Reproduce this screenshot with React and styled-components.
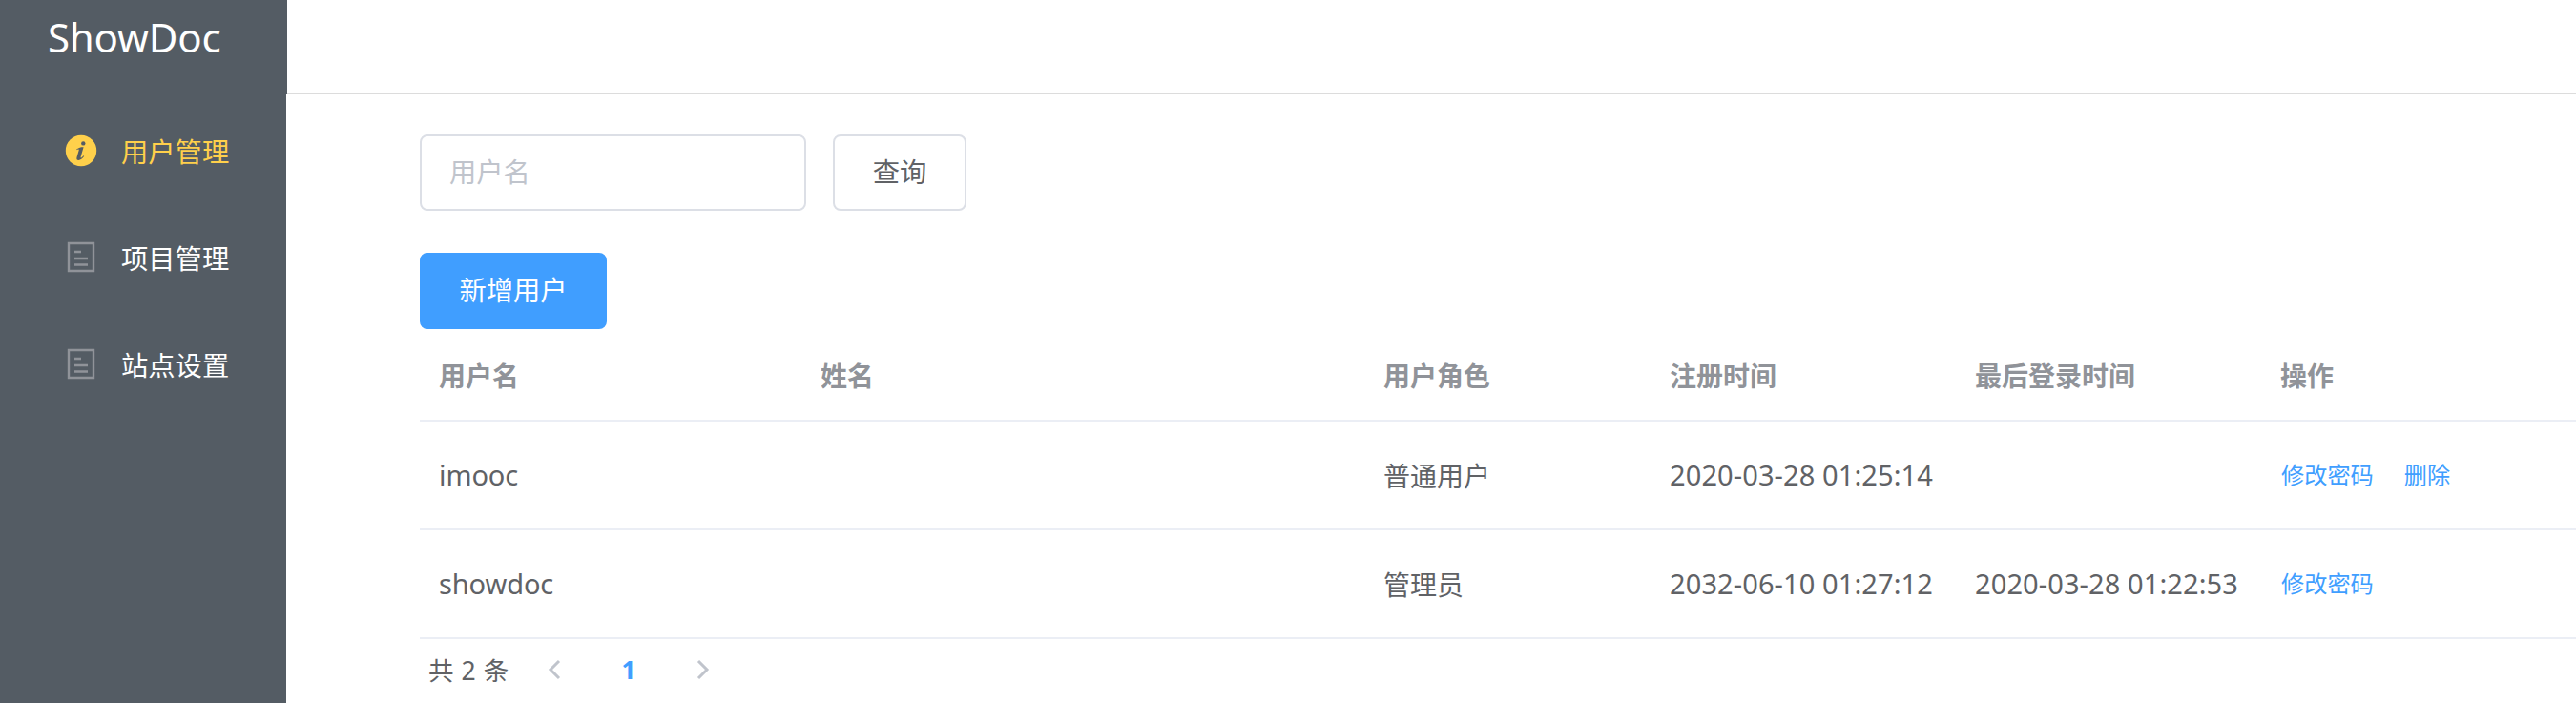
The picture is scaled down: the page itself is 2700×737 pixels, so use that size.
import React from "react";
import styled, { createGlobalStyle } from "styled-components";

const GlobalStyle = createGlobalStyle`
  * { box-sizing: border-box; }
  body {
    margin: 0;
    background: #fff;
    color: #606266;
    font-family: "Noto Sans", "Noto Sans CJK SC", sans-serif;
    font-size: 28px;
    overflow: hidden;
  }
  button, input { font: inherit; margin: 0; }
`;

const Page = styled.div`
  display: grid;
  grid-template-rows: 99px 1fr;
  width: 100%;
  height: 737px;
  overflow: hidden;
`;

const TopBar = styled.header`
  display: flex;
`;

const Brand = styled.div`
  width: 301px;
  padding-left: 50px;
  background: #545c64;
  color: #fff;
  font-size: 42px;
  letter-spacing: -0.2px;
  line-height: 78px;
`;

const TopRule = styled.div`
  flex: 1;
  border-bottom: 2px solid #dcdcdc;
`;

const Body = styled.div`
  display: flex;
  min-height: 0;
`;

const SideMenu = styled.nav`
  flex: none;
  width: 300px;
  padding-top: 4px;
  background: #545c64;
`;

const MenuItem = styled.a`
  display: flex;
  align-items: center;
  gap: 21px;
  height: 112px;
  padding: 0 0 3px 64px;
  color: ${(p) => (p.$active ? "#ffd04b" : "#fff")};
  font-size: 28.3px;
`;

const MenuIcon = styled.svg`
  display: block;
  flex: none;
  width: 42px;
  height: 42px;
`;

const Content = styled.main`
  flex: none;
  width: 2400px;
  padding: 42px 0 0 140px;
`;

const SearchForm = styled.form`
  display: flex;
  gap: 28px;
  margin-bottom: 44px;
`;

const TextInput = styled.input`
  width: 405px;
  height: 80px;
  padding: 0 30px 2px 29px;
  border: 2px solid #dcdfe6;
  border-radius: 8px;
  background: #fff;
  color: #606266;
  font-size: 28.3px;
  &::placeholder { color: #c0c4cc; opacity: 1; }
`;

const Button = styled.button`
  display: block;
  width: ${(p) => p.$width}px;
  height: 80px;
  padding: 0 0 2px;
  border: 2px solid ${(p) => (p.$primary ? "#409eff" : "#dcdfe6")};
  border-radius: 8px;
  background: ${(p) => (p.$primary ? "#409eff" : "#fff")};
  color: ${(p) => (p.$primary ? "#fff" : "#606266")};
  font-size: 28.3px;
  line-height: 74px;
`;

const Table = styled.div`
  width: 2400px;
`;

const Row = styled.div`
  display: grid;
  grid-template-columns: 400px 590px 300px 320px 320px 1fr;
  align-items: center;
  height: ${(p) => (p.$head ? 97 : 114)}px;
  border-bottom: 2px solid #ebeef5;
  color: ${(p) => (p.$head ? "#909399" : "#606266")};
  font-weight: ${(p) => (p.$head ? 700 : 400)};
`;

const Cell = styled.div`
  padding-left: 20px;
  white-space: nowrap;
`;

const Stamp = styled.span`
  display: block;
  padding-bottom: 1px;
  font-size: 29px;
  letter-spacing: ${(p) => (p.$digits ? 0.1 : -0.1)}px;
`;

const Actions = styled.div`
  display: flex;
  gap: 32px;
  padding: 0 0 3px 21px;
`;

const Action = styled.a`
  color: #409eff;
  font-size: 24.2px;
`;

const Pager = styled.div`
  display: flex;
  align-items: center;
  height: 64px;
  padding-left: 9px;
  font-size: 26px;
`;

const Total = styled.span`
  width: 122px;
  padding-bottom: 2px;
  font-size: 26.5px;
  letter-spacing: 0.6px;
`;

const Arrow = styled.svg`
  display: block;
  width: 20px;
  height: 24px;
  fill: none;
  stroke: #c0c4cc;
  stroke-width: 3;
`;

const PageNumber = styled.span`
  width: 136px;
  color: #409eff;
  font-weight: 700;
  text-align: center;
`;

const InfoIcon = () => (
  <MenuIcon viewBox="0 0 42 42">
    <circle cx="21" cy="21" r="16.2" fill="#ffd04b" />
    <circle cx="23.3" cy="13.4" r="2.2" fill="#545c64" />
    <path
      d="M16.2 19.4c2.7-1.6 4.6-2.2 7.4-2.1l-3 10.3c-.3 1.2.3 1.2 1 .6l1.9-1.9.7.5c-1.9 2.8-3.8 4.1-5.8 4.1-1.8 0-2.4-1.2-1.9-3l2.2-7.5c.2-.9-.2-1.1-.9-.8l-1.3.7z"
      fill="#545c64"
    />
  </MenuIcon>
);

const DocIcon = () => (
  <MenuIcon viewBox="0 0 42 42" fill="none" stroke="#909399" strokeWidth="2.4">
    <path d="M8 6H34V35H8ZM14 15H21M14 22H28M14 28.5H28" />
  </MenuIcon>
);

const menu = [
  { label: "用户管理", icon: InfoIcon, active: true },
  { label: "项目管理", icon: DocIcon },
  { label: "站点设置", icon: DocIcon },
];

const users = [
  { name: "imooc", role: "普通用户", created: "2020-03-28 01:25:14", last: "", actions: ["修改密码", "删除"] },
  { name: "showdoc", role: "管理员", created: "2032-06-10 01:27:12", last: "2020-03-28 01:22:53", actions: ["修改密码"] },
];

export default function App() {
  return (
    <>
      <GlobalStyle />
      <Page>
        <TopBar>
          <Brand>ShowDoc</Brand>
          <TopRule />
        </TopBar>
        <Body>
          <SideMenu>
            {menu.map(({ label, icon: Icon, active }) => (
              <MenuItem key={label} $active={active}>
                <Icon />
                <span>{label}</span>
              </MenuItem>
            ))}
          </SideMenu>
          <Content>
            <SearchForm>
              <TextInput placeholder="用户名" />
              <Button type="button" $width={140}>查询</Button>
            </SearchForm>
            <Button type="button" $width={196} $primary>新增用户</Button>
            <Table>
              <Row $head>
                {["用户名", "姓名", "用户角色", "注册时间", "最后登录时间", "操作"].map((title) => (
                  <Cell key={title}>{title}</Cell>
                ))}
              </Row>
              {users.map((user) => (
                <Row key={user.name}>
                  <Cell><Stamp>{user.name}</Stamp></Cell>
                  <Cell />
                  <Cell>{user.role}</Cell>
                  <Cell><Stamp $digits>{user.created}</Stamp></Cell>
                  <Cell><Stamp $digits>{user.last}</Stamp></Cell>
                  <Actions>
                    {user.actions.map((action) => (
                      <Action key={action}>{action}</Action>
                    ))}
                  </Actions>
                </Row>
              ))}
            </Table>
            <Pager>
              <Total>共 2 条</Total>
              <Arrow viewBox="0 0 20 24"><path d="M15 3L6 12L15 21" /></Arrow>
              <PageNumber>1</PageNumber>
              <Arrow viewBox="0 0 20 24"><path d="M5 3L14 12L5 21" /></Arrow>
            </Pager>
          </Content>
        </Body>
      </Page>
    </>
  );
}
